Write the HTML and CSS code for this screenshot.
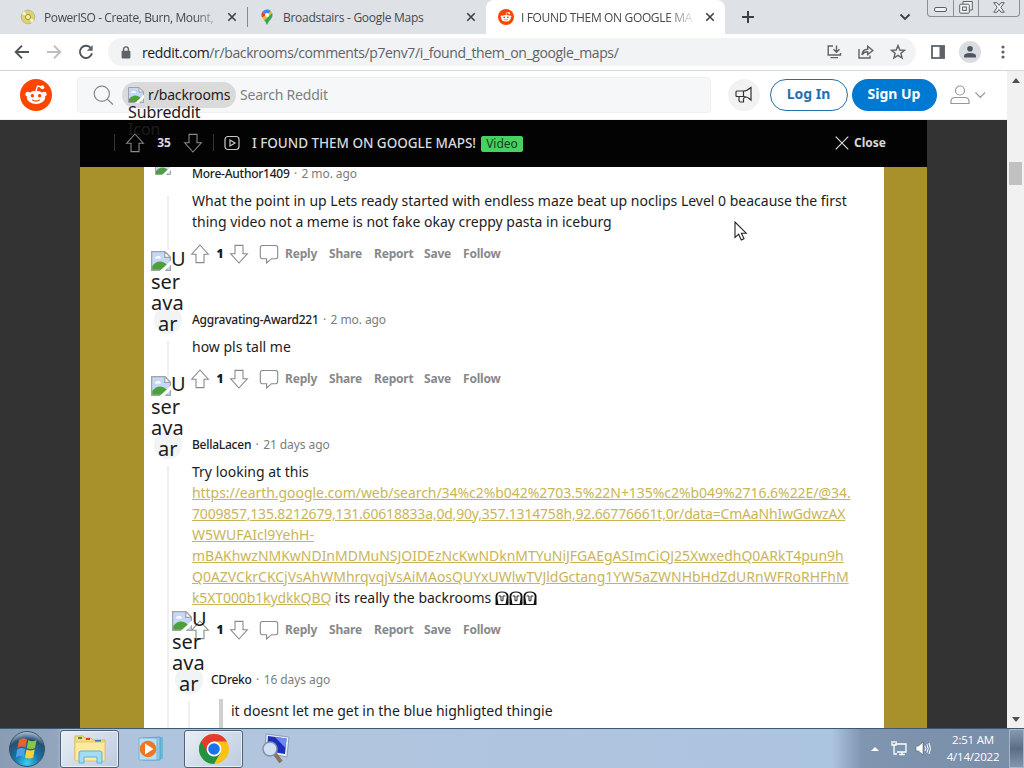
FILE: index.html
```html
<!DOCTYPE html>
<html lang="en">
<head>
  <meta charset="UTF-8">
  <meta name="viewport" content="width=device-width, initial-scale=1.0">
  <title>I FOUND THEM ON GOOGLE MAPS!</title>
  <link rel="stylesheet" href="styles.css">
</head>
<body>
  <!-- shared icons -->
  <svg class="defs" width="0" height="0">
    <symbol id="i-up" viewBox="0 0 20 20"><path d="M10 1 L18.3 10.2 H14 V18.6 H6 V10.2 H1.7 Z"/></symbol>
    <symbol id="i-down" viewBox="0 0 20 20"><path d="M10 19 L18.3 9.8 H14 V1.4 H6 V9.8 H1.7 Z"/></symbol>
    <symbol id="i-bubble" viewBox="0 0 20 20"><path d="M3.5 1.5 H16.5 Q18.7 1.5 18.7 3.7 V12.5 Q18.7 14.7 16.5 14.7 H12.5 L7.6 19 V14.7 H3.5 Q1.3 14.7 1.3 12.5 V3.7 Q1.3 1.5 3.5 1.5 Z"/></symbol>
    <symbol id="i-close" viewBox="0 0 10 10"><path d="M1.3 1.3 L8.7 8.7 M8.7 1.3 L1.3 8.7"/></symbol>
    <symbol id="i-broken" viewBox="0 0 16 16">
      <path d="M.5 .5 H11 L15.5 5 V15.5 H.5 Z" fill="#c5d8f5" stroke="#a0a4a8"/>
      <path d="M11 .5 V5 H15.5 Z" fill="#fff" stroke="#a0a4a8"/>
      <path d="M3 6 Q3.3 4 5.3 4.2 Q7.5 3.5 8 6 Z" fill="#fff"/>
      <path d="M1 15 V12 Q5 7 10 9 L13 11 V15 Z" fill="#4da03c"/>
      <path d="M7 16 L16 7.5 V11 L11 16 Z" fill="#fff"/>
    </symbol>
    <symbol id="i-reddit" viewBox="0 0 32 32">
      <circle cx="16" cy="16" r="16" fill="#ff4500"/>
      <path d="M16 12 L17.5 7 L22 8" fill="none" stroke="#fff" stroke-width="1.3"/>
      <circle cx="22.3" cy="8.3" r="2" fill="#fff"/>
      <circle cx="7.8" cy="15.2" r="2.4" fill="#fff"/>
      <circle cx="24.2" cy="15.2" r="2.4" fill="#fff"/>
      <ellipse cx="16" cy="18.4" rx="9.2" ry="6.6" fill="#fff"/>
      <circle cx="12.4" cy="16.7" r="1.7" fill="#ff4500"/>
      <circle cx="19.6" cy="16.7" r="1.7" fill="#ff4500"/>
      <path d="M12.2 20.8 Q16 23.5 19.8 20.8" fill="none" stroke="#ff4500" stroke-width="1.2"/>
    </symbol>
    <symbol id="i-face" viewBox="0 0 14 14">
      <path d="M.5 14 V5 Q.8 .5 7 .5 Q13.2 .5 13.5 5 V14 Z" fill="#111"/>
      <path d="M2.3 6 Q2.3 1.6 7 1.6 Q11.7 1.6 11.7 6 L10.6 13 H3.4 Z" fill="#fff"/>
      <path d="M3.7 5 H6 V9.8 H8 V5 H10.3" fill="none" stroke="#111" stroke-width=".9"/>
    </symbol>
  </svg>

  <div class="tabs">
    <div class="tab">
      <svg class="favicon" width="16" height="16" viewBox="0 0 16 16"><circle cx="8" cy="8" r="6.8" fill="#ddd36b" stroke="#b8b5a0"/><path d="M2 5 L8 8 L4 1.8 Z M14 11 L8 8 L12 14.5 Z" fill="#f5f2cf"/><circle cx="8" cy="8" r="2.6" fill="#f3edb0" stroke="#a08f30"/></svg>
      <span class="tab-title t-iso">PowerISO - Create, Burn, Mount,</span>
      <svg class="x" width="10" height="10"><use href="#i-close"/></svg>
    </div>
    <div class="tab second">
      <svg class="favicon" width="16" height="16" viewBox="0 0 16 16"><path d="M8 .5 A5.6 5.6 0 0 0 3.6 2.6 L8 6.2 L12 1.9 A5.6 5.6 0 0 0 8 .5" fill="#4285f4"/><path d="M3.6 2.6 A5.5 5.5 0 0 0 3 8.4 L8 6.2 Z" fill="#ea4335"/><path d="M3 8.4 L5.3 11.5 L13.3 4 L12 1.9 L8 6.2 Z" fill="#fbbc04"/><path d="M13.2 4 Q14.3 7 12 10 Q9 13 8.5 15.3 Q8 16.2 7.5 15.3 Q7 13.3 5.3 11.5 Z" fill="#34a853"/><circle cx="8" cy="6" r="2" fill="#fff"/></svg>
      <span class="tab-title t-maps">Broadstairs - Google Maps</span>
      <svg class="x" width="10" height="10"><use href="#i-close"/></svg>
    </div>
    <div class="tab current">
      <svg class="favicon" width="16" height="16"><use href="#i-reddit"/></svg>
      <span class="tab-title t-found fade">I FOUND THEM ON GOOGLE MA</span>
      <svg class="x" width="10" height="10"><use href="#i-close"/></svg>
    </div>
    <svg class="new-tab" width="14" height="14" viewBox="0 0 14 14"><path d="M7 1 V13 M1 7 H13"/></svg>
    <svg class="tab-search" width="12" height="8" viewBox="0 0 12 8"><path d="M1.5 1.5 L6 6 L10.5 1.5"/></svg>
    <div class="win-buttons">
      <span><svg width="13" height="6" viewBox="0 0 13 6"><rect x=".5" y=".5" width="12" height="4" rx="1.5"/></svg></span>
      <span><svg width="14" height="13" viewBox="0 0 14 13"><path d="M4 3 V.5 H13.3 V9 H10.5"/><rect x=".7" y="3.2" width="9.6" height="9" rx="1"/><rect x="3.6" y="6" width="3.8" height="3.4"/></svg></span>
      <span><svg width="12" height="11" viewBox="0 0 12 11"><path d="M.7 .7 H4 L6 3.3 L8 .7 H11.3 L7.8 5.4 L11.3 10.2 H8 L6 7.5 L4 10.2 H.7 L4.2 5.4 Z"/></svg></span>
    </div>
  </div>

  <div class="toolbar">
    <div class="nav">
      <svg width="16" height="16" viewBox="0 0 16 16"><path d="M15 8 H2 M8 1.7 L1.7 8 L8 14.3"/></svg>
      <svg class="off" width="16" height="16" viewBox="0 0 16 16"><path d="M1 8 H14 M8 1.7 L14.3 8 L8 14.3"/></svg>
      <svg width="16" height="16" viewBox="0 0 16 16"><path d="M13 4.3 A6.1 6.1 0 1 0 14 9.3"/><path d="M14.7 1 V6.8 H8.9 Z" fill="#5f6368" stroke="none"/></svg>
    </div>
    <div class="address">
      <svg class="lock" width="10" height="13" viewBox="0 0 10 13"><rect x=".6" y="4.8" width="8.8" height="7.7" rx="1" fill="#5f6368"/><path d="M2.6 5 V3.3 A2.4 2.4 0 0 1 7.4 3.3 V5" fill="none" stroke="#5f6368" stroke-width="1.4"/></svg>
      <span class="url"><b>reddit.com</b>/r/backrooms/comments/p7env7/i_found_them_on_google_maps/</span>
      <div class="address-icons">
        <svg width="16" height="14" viewBox="0 0 16 14"><path d="M7 1 H2.2 V10 H14.5 V8 M4.500 12.6 H12 M10.5 .5 V7 M7.5 4.3 L10.5 7.3 L13.5 4.3"/></svg>
        <svg width="16" height="14" viewBox="0 0 16 14"><path d="M1 4 V13 H12 V10.5 M4 9.8 Q4.5 4.3 9.7 4.2 V1.3 L14.8 5.5 L9.7 9.5 V6.8 Q6 6.6 4 9.8 Z"/></svg>
        <svg width="16" height="16" viewBox="0 0 16 16"><path d="M8 1.5 L9.8 6 L14.6 6.3 L10.9 9.3 L12.1 14 L8 11.4 L3.9 14 L5.1 9.3 L1.4 6.3 L6.2 6 Z"/></svg>
      </div>
    </div>
    <svg class="panel" width="14" height="14" viewBox="0 0 14 14"><rect x="1" y="1" width="12" height="12" fill="none" stroke="#5f6368" stroke-width="1.8"/><rect x="8.5" y="1" width="5" height="12" fill="#5f6368"/></svg>
    <svg class="person" width="22" height="22" viewBox="0 0 22 22"><circle cx="11" cy="11" r="11" fill="#dadce0"/><circle cx="11" cy="7.8" r="2.8" fill="#4d5660"/><path d="M5 16.5 V14.8 Q5.5 12 11 12 Q16.5 12 17 14.8 V16.5 Z" fill="#4d5660"/></svg>
    <svg class="dots" width="4" height="14" viewBox="0 0 4 14"><circle cx="2" cy="2" r="1.6"/><circle cx="2" cy="7" r="1.6"/><circle cx="2" cy="12" r="1.6"/></svg>
  </div>

  <div class="page">
    <div class="view">
      <header>
        <svg class="logo" width="32" height="32"><use href="#i-reddit"/></svg>
        <div class="search">
          <svg width="21" height="20" viewBox="0 0 21 20"><circle cx="8.8" cy="8.8" r="7.6" fill="none" stroke="#878a8c" stroke-width="1.2"/><path d="M14.3 14.3 L20 19.5" stroke="#878a8c" stroke-width="1.2"/></svg>
          <div class="chip">
            <svg width="16" height="16"><use href="#i-broken"/></svg>
            <span>r/backrooms</span>
            <div class="chip-alt">Subreddit<br><i>Icon</i></div>
          </div>
          <span class="placeholder">Search Reddit</span>
        </div>
        <div class="horn"><svg width="18" height="18" viewBox="0 0 18 18"><path d="M1 6 Q1 5 2 5 H8.5 Q12 5 16 1.5 V14 Q12.500 10.500 8.5 10.500 H2 Q1 10.500 1 9.500 Z M8.5 5 V10.5 M4 10.7 V14.500 Q4 16 5.500 16 H8.5 V13 L9.500 10.7"/></svg></div>
        <div class="btn login"><span>Log In</span></div>
        <div class="btn signup"><span>Sign Up</span></div>
        <svg class="user" width="36" height="20" viewBox="0 0 36 20"><circle cx="10" cy="5.5" r="4.5"/><path d="M1 18.5 V16 Q1.5 12.5 5 12.5 H15 Q18.5 12.5 19 16 V18.5 Z M25.5 7.5 L30.3 12.5 L35 7.5"/></svg>
      </header>

      <main>
        <div class="overlay">
          <div class="post-bar">
            <i class="sep"></i>
            <svg class="vote" width="20" height="20"><use href="#i-up"/></svg>
            <b class="score">35</b>
            <svg class="vote" width="20" height="20"><use href="#i-down"/></svg>
            <i class="sep second-sep"></i>
            <svg class="video" width="16" height="16" viewBox="0 0 16 16"><rect x="1" y="1.5" width="14" height="13" rx="3"/><path d="M6 5 L11 8 L6 11 Z"/></svg>
            <span class="post-title">I FOUND THEM ON GOOGLE MAPS!</span>
            <span class="flair"><span>Video</span></span>
            <div class="close"><svg width="14" height="14" viewBox="0 0 14 14"><path d="M.7 .7 L13.3 13.3 M13.3 .7 L.7 13.3"/></svg><span>Close</span></div>
          </div>

          <div class="comments">
            <div class="comment first">
              <svg class="cut-avatar" width="16" height="16"><use href="#i-broken"/></svg>
              <div class="thread"></div>
              <div class="meta"><b>More-Author1409</b><i>·</i><span>2 mo. ago</span></div>
              <p>What the point in up Lets ready started with endless maze beat up noclips Level 0 beacause the first<br>thing video not a meme is not fake okay creppy pasta in iceburg</p>
              <div class="actions"><svg><use href="#i-up"/></svg><b>1</b><svg><use href="#i-down"/></svg><svg><use href="#i-bubble"/></svg><span>Reply</span><span>Share</span><span>Report</span><span>Save</span><span>Follow</span></div>
            </div>

            <div class="comment">
              <div class="avatar"><svg width="20" height="20"><use href="#i-broken"/></svg>U<br>ser<br>ava<br><em>ar</em></div>
              <div class="thread"></div>
              <div class="meta"><b>Aggravating-Award221</b><i>·</i><span>2 mo. ago</span></div>
              <p>how pls tall me</p>
              <div class="actions"><svg><use href="#i-up"/></svg><b>1</b><svg><use href="#i-down"/></svg><svg><use href="#i-bubble"/></svg><span>Reply</span><span>Share</span><span>Report</span><span>Save</span><span>Follow</span></div>
            </div>

            <div class="comment">
              <div class="avatar"><svg width="20" height="20"><use href="#i-broken"/></svg>U<br>ser<br>ava<br><em>ar</em></div>
              <div class="thread long"></div>
              <div class="meta"><b>BellaLacen</b><i>·</i><span>21 days ago</span></div>
              <p>Try looking at this<br>
                <a><span>https://earth.google.com/web/search/34%c2%b042%2703.5%22N+135%c2%b049%2716.6%22E/@34.</span><br><span class="tight">7009857,135.8212679,131.60618833a,0d,90y,357.1314758h,92.66776661t,0r/data=CmAaNhIwGdwzAX</span><br>W5WUFAIcl9YehH-<br><span class="snug">mBAKhwzNMKwNDInMDMuNSJOIDEzNcKwNDknMTYuNiJFGAEgASImCiQJ25XwxedhQ0ARkT4pun9h</span><br><span class="snug">Q0AZVCkrCKCjVsAhWMhrqvqjVsAiMAosQUYxUWlwTVJldGctang1YW5aZWNHbHdZdURnWFRoRHFhM</span><br><span class="last">k5XT000b1kydkkQBQ</span></a> its really the backrooms <svg class="face"><use href="#i-face"/></svg><svg class="face"><use href="#i-face"/></svg><svg class="face"><use href="#i-face"/></svg></p>
              <div class="actions"><svg><use href="#i-up"/></svg><b>1</b><svg><use href="#i-down"/></svg><svg><use href="#i-bubble"/></svg><span>Reply</span><span>Share</span><span>Report</span><span>Save</span><span>Follow</span></div>
            </div>

            <div class="comment reply">
              <div class="avatar"><svg width="20" height="20"><use href="#i-broken"/></svg>U<br>ser<br>ava<br><em>ar</em></div>
              <div class="thread"></div>
              <div class="meta"><b>CDreko</b><i>·</i><span>16 days ago</span></div>
              <blockquote>it doesnt let me get in the blue highligted thingie</blockquote>
            </div>
          </div>
        </div>
      </main>
    </div>

    <div class="scrollbar">
      <i class="arrow-up"></i>
      <i class="thumb"></i>
      <i class="arrow-down"></i>
    </div>
  </div>

  <div class="taskbar">
    <div class="start">
      <svg width="38" height="38" viewBox="0 0 38 38">
        <defs><radialGradient id="orb" cx=".5" cy=".9" r=".9"><stop offset="0" stop-color="#3fd0f0"/><stop offset=".4" stop-color="#1773a8"/><stop offset=".75" stop-color="#27506f"/><stop offset="1" stop-color="#b5cbd8"/></radialGradient></defs>
        <circle cx="19" cy="19" r="17.5" fill="url(#orb)" stroke="#35536c"/>
        <path d="M11 10 Q15 7 19 9.5 L17.5 17.5 Q13.5 15.5 9.5 18 Z" fill="#e8622c"/>
        <path d="M20.3 10 Q24 12.5 28.5 10 L27 18 Q23 20 18.8 18 Z" fill="#8cc63f"/>
        <path d="M9.2 19.5 Q13 17 17.2 19 L15.7 27 Q12 25 7.8 27.5 Z" fill="#4aa3e8"/>
        <path d="M18.5 19.5 Q22.5 21.5 26.7 19.5 L25.2 27.5 Q21.5 29.5 17 27.5 Z" fill="#fdd13a"/>
      </svg>
    </div>
    <div class="task open">
      <svg width="36" height="32" viewBox="0 0 36 32">
        <path d="M3 3 H11 L13 5 H19 L21 7 H33 V27 H3 Z" fill="#f4dd83" stroke="#d5b75a"/>
        <path d="M6 4 H10 V6 H6 Z" fill="#35a04a"/><path d="M14 5 H18 V7 H14 Z" fill="#d9442f"/><path d="M23 7 H29 V9 H23 Z" fill="#3c78c4"/>
        <path d="M3 9 H33 V28 H3 Z" fill="#fbeaa0" stroke="#e0c76d"/>
        <path d="M7 30 V20 Q7 18 9 18 H28 Q30 18 30 20 V30 H25 V24 H12 V30 Z" fill="#a5dcf5" stroke="#5cb1db"/>
      </svg>
    </div>
    <div class="task">
      <svg width="30" height="28" viewBox="0 0 30 28"><path d="M10 3 L26 2 V24 L10 25 Z" fill="#71b6da"/><path d="M6 3 L23 2 V25 L6 25 Z" fill="#91cbe8" stroke="#4d9bc5" stroke-width=".8"/><path d="M2 3 H20 V25 H2 Z" fill="#b9dff0" stroke="#69abd0" stroke-width=".8"/><circle cx="11" cy="14" r="8.3" fill="#ee7724"/><path d="M8 8.5 L16.5 14 L8 19.5 Z" fill="#fff"/></svg>
    </div>
    <div class="task open">
      <svg width="30" height="30" viewBox="0 0 30 30"><circle cx="15" cy="15" r="15" fill="#fbc116"/><path d="M15 15 L2 7.5 A15 15 0 0 0 15 30 L21.5 18.7 Z" fill="#229342"/><path d="M2 7.5 A15 15 0 0 1 28 7.5 H15 L8.5 18.7 Z" fill="#e33b2e"/><circle cx="15" cy="15" r="7.4" fill="#fff"/><circle cx="15" cy="15" r="5.8" fill="#1a73e8"/></svg>
    </div>
    <div class="task">
      <svg width="30" height="32" viewBox="0 0 30 32"><path d="M5 1 L28 4 L26 24 L4 20 Z" fill="#e4ebf3" stroke="#8c9bb4"/><path d="M7 3 L25.5 5.5 L24 21 L6 18 Z" fill="#1d2fb8"/><path d="M14 4 L25.5 5.5 L24.5 15 Z" fill="#6d8af0"/><path d="M14 21 L20 29" stroke="#8a7356" stroke-width="4"/><circle cx="9" cy="16" r="7" fill="#cfe0f1" stroke="#7f93ab" stroke-width="1.5"/></svg>
    </div>
    <div class="tray">
      <i class="tray-arrow"></i>
      <svg width="16" height="17" viewBox="0 0 16 17"><path d="M5.5 4 H15 V12 H6 M8 14.5 H14 M11 12 V14 M1 1 V5 H5 V1 M3 1 V3 M3 5 V14 H6" fill="none" stroke="#fff" stroke-width="1.3"/></svg>
      <svg width="16" height="15" viewBox="0 0 16 15"><path d="M1 5 H3.5 L8 1 V14 L3.5 10 H1 Z" fill="#fff" stroke="#4a5a6c" stroke-width=".6"/><path d="M10 5 Q11.5 7.5 10 10 M12 3.3 Q14.3 7.5 12 11.7 M14 2 Q17 7.5 14 13" fill="none" stroke="#fff" stroke-width="1"/></svg>
      <div class="clock">2:51 AM<br>4/14/2022</div>
      <div class="peek"></div>
    </div>
  </div>

  <svg class="cursor" width="14" height="21" viewBox="0 0 14 21"><path d="M1 1 V16.5 L4.6 13.2 L7.3 19 L10 17.8 L7.4 12.2 H12.2 Z" fill="#fff" stroke="#222" stroke-width="1.1"/></svg>
</body>
</html>
```
FILE: styles.css
```css
* {
  box-sizing: border-box;
}

body {
  margin: 0;
  width: 1024px;
  height: 768px;
  overflow: hidden;
  display: flex;
  flex-direction: column;
  font-family: "Noto Sans", sans-serif;
  color: #1c1c1c;
}

svg {
  flex: none;
  display: block;
}

.defs {
  position: absolute;
}

i, em {
  font-style: normal;
}

/* browser tabs */
.tabs {
  height: 34px;
  flex: none;
  display: flex;
  align-items: center;
  background: #dee1e6;
  font-family: "Open Sans", sans-serif;
  font-size: 12px;
  color: #45494d;
}

.tab {
  width: 248px;
  height: 34px;
  padding: 0 11px 0 20px;
  display: flex;
  align-items: center;
  background: linear-gradient(#85898e, #85898e) right center / 1px 20px no-repeat;
}

.tab.second {
  width: 238px;
  padding: 0 10px 0 11px;
  background: none;
}

.tab.current {
  width: 239px;
  padding: 0 10px 0 12px;
  background: #fff;
  border-radius: 8px 8px 0 0;
}

.tab-title {
  margin-left: 8px;
  flex: 1;
  overflow: hidden;
  white-space: nowrap;
}

.t-iso {
  letter-spacing: -0.4px;
  -webkit-mask-image: linear-gradient(90deg, #000 150px, rgba(0, 0, 0, 0.3) 170px);
  mask-image: linear-gradient(90deg, #000 150px, rgba(0, 0, 0, 0.3) 170px);
}

.t-maps {
  letter-spacing: -0.28px;
}

.t-found {
  letter-spacing: -0.35px;
}

.tab-title.fade {
  flex: none;
  width: 175px;
  margin-right: 9px;
  margin-left: 7px;
  -webkit-mask-image: linear-gradient(90deg, #000 145px, transparent 176px);
  mask-image: linear-gradient(90deg, #000 145px, transparent 176px);
}

.x {
  fill: none;
  stroke: #3c4043;
  stroke-width: 1.6;
}

.new-tab {
  margin-left: 16px;
  fill: none;
  stroke: #3c4043;
  stroke-width: 2;
}

.tab-search {
  margin-left: 144px;
  fill: none;
  stroke: #3c4043;
  stroke-width: 1.8;
}

.win-buttons {
  margin-left: 16px;
  width: 93px;
  height: 17px;
  align-self: flex-start;
  display: grid;
  grid-template-columns: 25px 25px 1fr;
  border: 1px solid #8b9096;
  border-top: 0;
  border-radius: 0 0 4px 4px;
}

.win-buttons span {
  display: flex;
  align-items: center;
  justify-content: center;
  padding: 0 1px 1px 0;
}

.win-buttons span:first-child {
  padding-top: 5px;
}

.win-buttons span + span {
  border-left: 1px solid #8b9096;
}

.win-buttons svg {
  fill: #f1f2f4;
  stroke: #5b6068;
}

/* toolbar */
.toolbar {
  height: 37px;
  flex: none;
  display: flex;
  align-items: center;
  background: #fff;
  border-bottom: 1px solid #d5d7da;
}

.nav {
  display: flex;
  gap: 16px;
  padding-left: 14px;
}

.nav svg {
  fill: none;
  stroke: #505458;
  stroke-width: 1.9;
}

.nav .off {
  stroke: #bcbfc2;
}

.address {
  width: 808px;
  height: 28px;
  margin-left: 14px;
  padding: 0 10px 0 13px;
  display: flex;
  align-items: center;
  border-radius: 14px;
  background: #f1f3f4;
}

.url {
  flex: 1;
  margin-left: 11px;
  font-family: "Open Sans", sans-serif;
  font-size: 14px;
  letter-spacing: -0.37px;
  color: #5f6368;
  white-space: nowrap;
}

.url b {
  font-weight: 400;
  color: #202124;
}

.address-icons {
  display: flex;
  align-items: center;
  gap: 16px;
}

.address-icons svg {
  fill: none;
  stroke: #5f6368;
  stroke-width: 1.4;
}

.panel {
  margin-left: 15px;
}

.person {
  margin-left: 14px;
}

.dots {
  margin-left: 20px;
  fill: #5f6368;
}

/* reddit page */
.page {
  height: 657px;
  flex: none;
  display: flex;
}

.view {
  width: 1007px;
  display: flex;
  flex-direction: column;
}

header {
  height: 49px;
  flex: none;
  padding-left: 20px;
  display: flex;
  align-items: center;
  background: #fff;
  border-bottom: 1px solid #edeff1;
}

.search {
  width: 634px;
  height: 36px;
  margin-left: 25px;
  padding: 0 0 1px 15px;
  display: flex;
  align-items: center;
  background: #f6f7f8;
  border: 1px solid #edeff1;
  border-radius: 4px;
}

.chip {
  position: relative;
  width: 114px;
  height: 26px;
  margin-left: 8px;
  padding-left: 6px;
  display: flex;
  align-items: center;
  gap: 4px;
  border-radius: 13px;
  background: #dadada;
  font-size: 14px;
  letter-spacing: -0.15px;
}

.chip-alt {
  position: absolute;
  z-index: 2;
  left: 6px;
  top: 22px;
  font-size: 16px;
  line-height: 17px;
  letter-spacing: -0.1px;
}

.placeholder {
  margin-left: 4px;
  font-size: 14px;
  letter-spacing: -0.2px;
  color: #7c7f82;
}

.horn {
  width: 32px;
  height: 32px;
  margin-left: 17px;
  display: flex;
  align-items: center;
  justify-content: center;
  border-radius: 50%;
  background: #f2f2f2;
}

.horn svg {
  fill: none;
  stroke: #333;
  stroke-width: 1.2;
}

.btn {
  height: 32px;
  padding: 0 1px 3px 0;
  display: flex;
  align-items: center;
  justify-content: center;
  border-radius: 16px;
  font-size: 14px;
  font-weight: 700;
}

.login {
  width: 78px;
  margin-left: 10px;
  border: 1px solid #2470a8;
  color: #2470b5;
}

.signup {
  width: 85px;
  margin-left: 4px;
  background: #0079d3;
  color: #fff;
}

.user {
  margin-left: 13px;
  fill: none;
  stroke: #96999b;
  stroke-width: 1.2;
}

main {
  height: 608px;
  flex: none;
  padding-left: 80px;
  background: #333;
}

.overlay {
  width: 847px;
  height: 608px;
  background: #a8912b;
}

.post-bar {
  height: 47px;
  padding: 0 41px 2px 34px;
  display: flex;
  align-items: center;
  background: #030303;
  color: #d7dadc;
}

.sep {
  width: 1px;
  height: 17px;
  background: #343536;
}

.vote {
  margin-left: 10px;
  fill: none;
  stroke: #87898b;
  stroke-width: 1.1;
}

.score {
  width: 18px;
  margin: 0 0 0 10px;
  font-size: 12px;
  text-align: center;
}

.second-sep {
  margin-left: 10px;
}

.video {
  margin-left: 10px;
  fill: none;
  stroke: #c6c8ca;
  stroke-width: 1.2;
}

.post-title {
  margin-left: 12px;
  width: 225px;
  font-size: 13.5px;
  font-weight: 500;
  letter-spacing: -0.04px;
  white-space: nowrap;
}

.flair {
  width: 42px;
  height: 16px;
  margin: 2px 0 0 4px;
  display: flex;
  align-items: center;
  justify-content: center;
  border-radius: 2px;
  background: #46d160;
  color: #12421b;
  font-size: 12px;
}

.close {
  margin-left: auto;
  display: flex;
  align-items: center;
  gap: 5px;
  font-size: 12px;
  font-weight: 700;
}

.close svg {
  stroke: #d7dadc;
  stroke-width: 1.2;
}

/* comments */
.comments {
  width: 740px;
  height: 561px;
  margin-left: 64px;
  padding-left: 48px;
  overflow: hidden;
  background: #fff;
}

.comment {
  position: relative;
  margin-top: 46px;
}

.comment.first {
  margin-top: -1px;
}

.comment.reply {
  margin: 30px 0 0 19px;
}

.meta {
  height: 16px;
  padding-bottom: 2px;
  display: flex;
  align-items: center;
  font-size: 12px;
  color: #7c7c7c;
  white-space: nowrap;
}

.meta b {
  font-weight: 500;
  letter-spacing: -0.25px;
  color: #1c1c1c;
}

.meta span {
  letter-spacing: -0.08px;
}

.meta i {
  width: 12px;
  text-align: center;
}

.comment p {
  margin: 8px 0 10px;
  font-size: 14px;
  line-height: 21px;
  white-space: nowrap;
}

.comment a {
  color: #c9b557;
  text-decoration: underline;
}

.comment a span {
  letter-spacing: -0.05px;
}

.comment a .tight {
  letter-spacing: -0.19px;
}

.comment a .snug {
  letter-spacing: -0.02px;
}

.comment a .last {
  letter-spacing: -0.12px;
}

.face {
  display: inline-block;
  width: 14px;
  height: 14px;
  vertical-align: -2px;
}

.actions {
  height: 24px;
  padding-bottom: 2px;
  display: grid;
  grid-template-columns: 18px 20px 22px 33px 44px 45px 50px 39px 44px;
  align-items: center;
  font-size: 12px;
  font-weight: 700;
  letter-spacing: -0.2px;
  color: #878a8c;
}

.actions svg {
  width: 20px;
  height: 20px;
  margin: 1px 0 0 -2px;
  fill: none;
  stroke: #878a8c;
  stroke-width: 1.1;
}

.actions svg:nth-of-type(2) {
  margin-left: -1px;
}

.actions svg:nth-of-type(3) {
  margin-left: 7px;
}

.actions b {
  text-align: center;
  color: #1c1c1c;
}

.thread {
  position: absolute;
  left: -25px;
  top: 30px;
  width: 2px;
  height: 54px;
  background: #edeff1;
}

.comment:not(.first) .thread {
  top: 29px;
  height: 34px;
}

.comment .thread.long {
  height: 280px;
}

.cut-avatar {
  position: absolute;
  left: -37px;
  top: -7px;
}

/* alt text of the missing image wraps inside the narrow avatar */
.avatar {
  position: absolute;
  z-index: 1;
  left: -41px;
  top: -64px;
  width: 36px;
  font-size: 20px;
  line-height: 21px;
  white-space: nowrap;
}

.avatar::before {
  content: "";
  position: absolute;
  z-index: -1;
  left: 3px;
  bottom: 0;
  width: 28px;
  height: 28px;
  border-radius: 50%;
  background: #f2f3f4;
}

.avatar svg {
  display: inline-block;
  vertical-align: -5px;
}

.avatar em {
  padding-left: 7px;
}

.reply .avatar {
  left: -39px;
}

.reply .thread {
  left: -23px;
}

blockquote {
  margin: 11px 0 0 8px;
  height: 40px;
  padding: 1px 0 0 8px;
  border-left: 4px solid #d0d0d0;
  font-size: 14px;
  line-height: 21px;
}

/* page scrollbar */
.scrollbar {
  width: 17px;
  background: #f1f1f1;
  display: flex;
  flex-direction: column;
  align-items: center;
}

.arrow-up {
  margin-top: 7px;
  border: 4px solid transparent;
  border-top: 0;
  border-bottom: 5px solid #505050;
}

.thumb {
  width: 13px;
  height: 23px;
  margin-top: 79px;
  background: #c1c1c1;
}

.arrow-down {
  margin: auto 0 6px;
  border: 4px solid transparent;
  border-bottom: 0;
  border-top: 5px solid #505050;
}

/* taskbar */
.taskbar {
  height: 40px;
  flex: none;
  display: flex;
  align-items: center;
  border-top: 1px solid #3b5875;
  background: linear-gradient(90deg, #8a9cb3 0, #93a6be 58px, #afc2dc 62px, #b2c5de 260px, #abc4e0 832px, #7f95b0 862px, #788da6 1024px);
}

.start {
  width: 60px;
  padding-left: 8px;
}

.task {
  width: 59px;
  height: 38px;
  margin-right: 3px;
  display: flex;
  align-items: center;
  justify-content: center;
}

.task.open {
  border: 1px solid #4e6177;
  border-radius: 3px;
  background: linear-gradient(135deg, #e8eef5, #bccbdf);
  box-shadow: inset 0 0 0 1px #e9f0f7;
}

.tray {
  height: 39px;
  margin-left: auto;
  display: flex;
  align-items: center;
}

.tray-arrow {
  margin-right: 12px;
  border: 4px solid transparent;
  border-top: 0;
  border-bottom: 4px solid #fff;
}

.tray svg + svg {
  margin-left: 8px;
}

.clock {
  width: 54px;
  margin: 0 9px 2px 15px;
  font-family: "Open Sans", sans-serif;
  font-size: 11.5px;
  line-height: 17px;
  letter-spacing: -0.2px;
  text-align: center;
  white-space: nowrap;
  color: #fff;
}

.peek {
  width: 15px;
  height: 39px;
  border: 1px solid #a5b6c8;
  background: linear-gradient(#8799ae, #596d85 50%, #8295ab);
}

.cursor {
  position: absolute;
  left: 734px;
  top: 221px;
  z-index: 5;
}
```
